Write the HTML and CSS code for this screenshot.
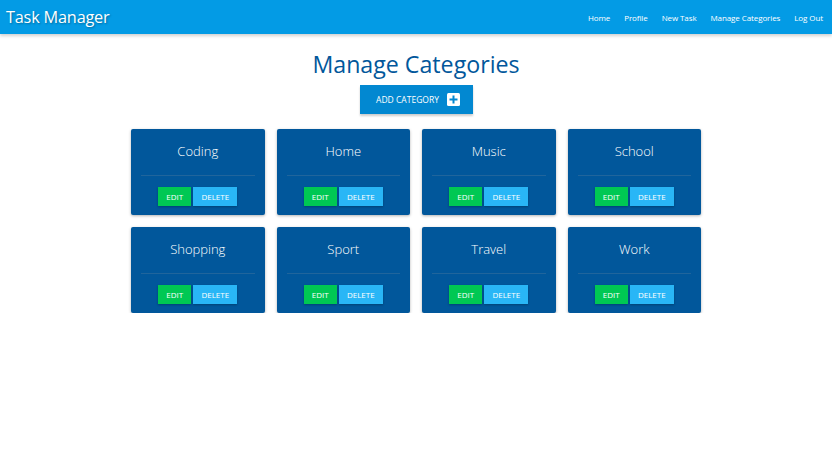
FILE: index.html
```html
<!DOCTYPE html>
<html>
<head>
<meta charset="utf-8">
<link rel="stylesheet" href="styles.css">
</head>
<body>
<nav class="navbar">
  <a class="brand">Task Manager</a>
  <ul class="nav-links">
    <li>Home</li>
    <li>Profile</li>
    <li>New Task</li>
    <li>Manage Categories</li>
    <li>Log Out</li>
  </ul>
</nav>
<main class="content">
  <h1 class="page-title">Manage Categories</h1>
  <button class="add-btn">ADD CATEGORY
    <svg class="add-icon" width="13" height="13" viewBox="0 0 13 13"><rect x="0" y="0" width="13" height="13" rx="1.5" fill="#fff"/><rect x="5.5" y="2.5" width="2" height="8" fill="#0288d1"/><rect x="2.5" y="5.5" width="8" height="2" fill="#0288d1"/></svg>
  </button>
  <section class="grid">
    <div class="card"><div class="card-title">Coding</div><div class="card-action"><span class="btn edit">EDIT</span><span class="btn delete">DELETE</span></div></div>
    <div class="card"><div class="card-title">Home</div><div class="card-action"><span class="btn edit">EDIT</span><span class="btn delete">DELETE</span></div></div>
    <div class="card"><div class="card-title">Music</div><div class="card-action"><span class="btn edit">EDIT</span><span class="btn delete">DELETE</span></div></div>
    <div class="card"><div class="card-title">School</div><div class="card-action"><span class="btn edit">EDIT</span><span class="btn delete">DELETE</span></div></div>
    <div class="card"><div class="card-title">Shopping</div><div class="card-action"><span class="btn edit">EDIT</span><span class="btn delete">DELETE</span></div></div>
    <div class="card"><div class="card-title">Sport</div><div class="card-action"><span class="btn edit">EDIT</span><span class="btn delete">DELETE</span></div></div>
    <div class="card"><div class="card-title">Travel</div><div class="card-action"><span class="btn edit">EDIT</span><span class="btn delete">DELETE</span></div></div>
    <div class="card"><div class="card-title">Work</div><div class="card-action"><span class="btn edit">EDIT</span><span class="btn delete">DELETE</span></div></div>
  </section>
</main>
</body>
</html>
```

FILE: styles.css
```css
* { box-sizing: border-box; }
body {
  margin: 0;
  font-family: "Open Sans", "Noto Sans", sans-serif;
  background: #fff;
  color: #fff;
}
.navbar {
  height: 34px;
  background: #039be5;
  display: flex;
  align-items: center;
  justify-content: space-between;
  padding: 0 9px 0 6px;
  box-shadow: 0 2px 3px rgba(0,0,0,0.18);
}
.brand {
  font-size: 16.3px;
  color: #fff;
  text-shadow: 1px 1px 2px rgba(0,0,0,0.3);
  letter-spacing: -0.2px;
}
.nav-links {
  list-style: none;
  display: flex;
  gap: 14px;
  margin: 0;
  padding: 0;
  font-size: 8px;
  letter-spacing: -0.1px;
}
.content {
  display: flex;
  flex-direction: column;
  align-items: center;
}
.page-title {
  margin: 15px 0 0;
  font-size: 23.2px;
  font-weight: 400;
  color: #01579b;
  line-height: 30px;
}
.add-btn {
  margin-top: 6px;
  width: 113px;
  height: 29px;
  border: none;
  background: #0288d1;
  color: #fff;
  font-family: inherit;
  font-size: 8.5px;
  display: flex;
  align-items: center;
  justify-content: center;
  gap: 8px;
  box-shadow: 0 2px 2px rgba(0,0,0,0.2);
  padding: 0 0 0 4px;
}
.grid {
  margin-top: 15px;
  display: grid;
  grid-template-columns: repeat(4, 133.5px);
  gap: 12px;
}
.card {
  height: 86px;
  background: #01579b;
  box-shadow: 0 1px 3px rgba(0,0,0,0.3);
  border-radius: 2px;
  display: flex;
  flex-direction: column;
  padding: 0 10px;
}
.card-title {
  height: 46px;
  padding-top: 13px;
  text-align: center;
  font-size: 13px;
  font-weight: 300;
  line-height: 18px;
}
.card-action {
  border-top: 1px solid rgba(160,160,160,0.2);
  display: flex;
  justify-content: center;
  gap: 2px;
  padding-top: 11px;
}
.btn {
  height: 19px;
  line-height: 19px;
  font-size: 8px;
  text-align: center;
  box-shadow: 0 1px 2px rgba(0,0,0,0.25);
}
.edit { width: 33px; background: #00c853; }
.delete { width: 44px; background: #29b6f6; }
```
